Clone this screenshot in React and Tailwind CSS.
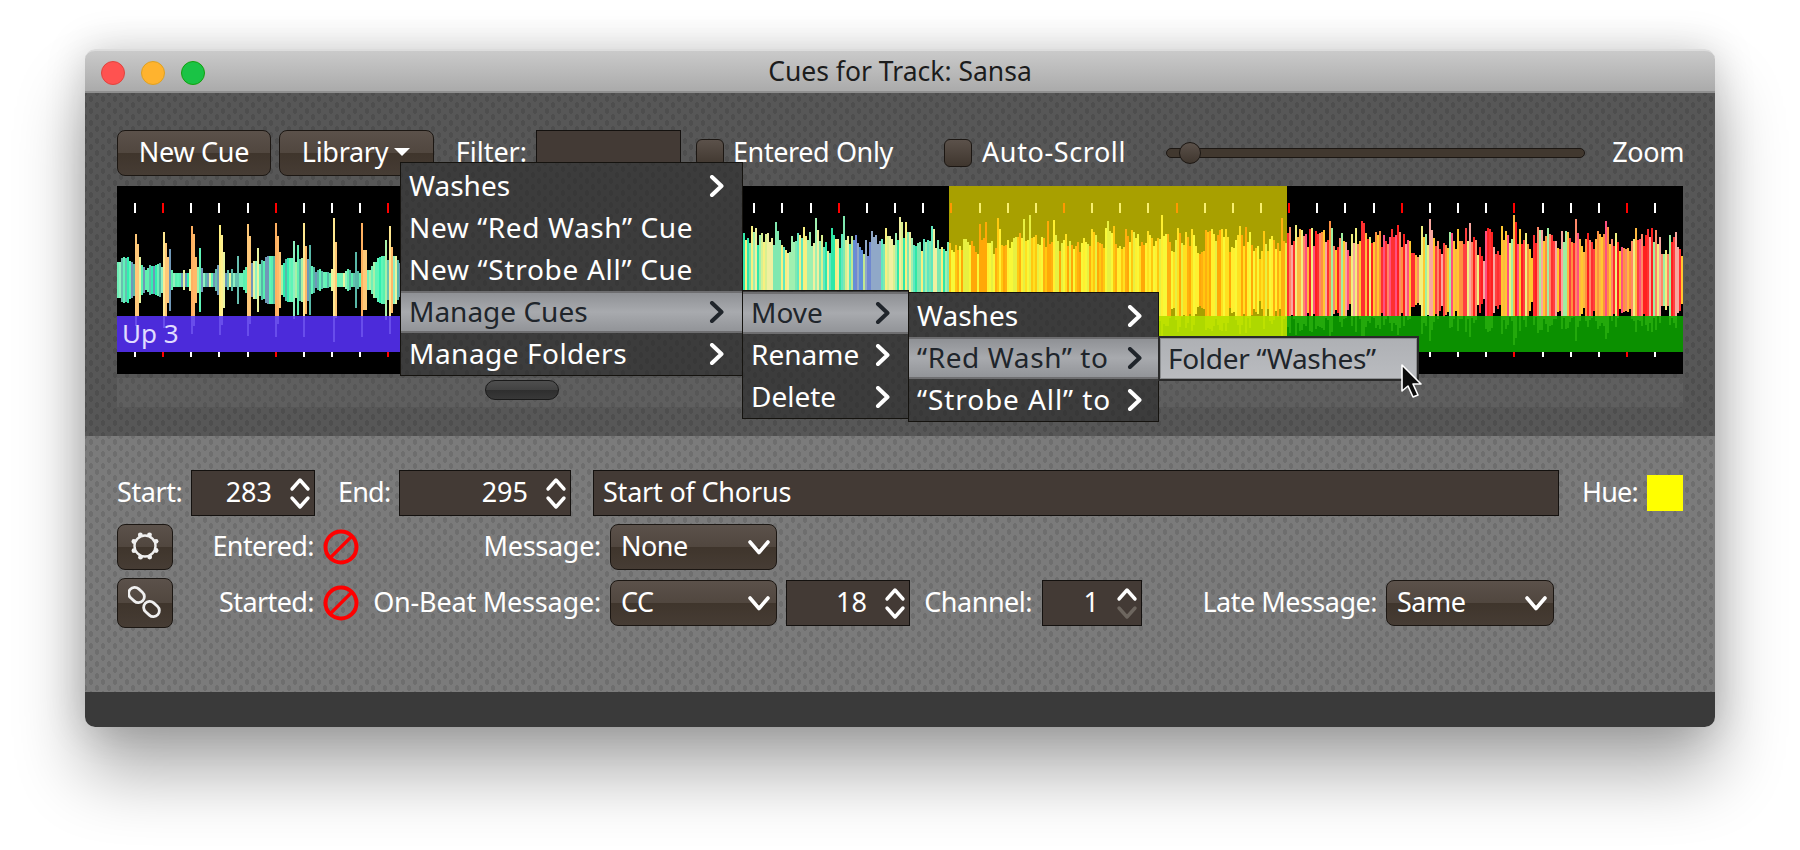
import React from "react";

const uiFont = "[font-family:'Noto_Sans',sans-serif]";
const darkTex =
  "bg-[#575757] bg-[radial-gradient(ellipse_2px_3px,#4e4e4e_90%,transparent_100%),radial-gradient(ellipse_2px_3px,#4e4e4e_90%,transparent_100%)] bg-[length:12px_12px] bg-[position:0_0,6px_6px]";
const lightTex =
  "bg-[#7b7b7b] bg-[radial-gradient(ellipse_2px_3px,#6e6e6e_90%,transparent_100%),radial-gradient(ellipse_2px_3px,#6e6e6e_90%,transparent_100%)] bg-[length:12px_12px] bg-[position:0_0,6px_6px]";
const menuTex =
  "bg-[#3c3c3c] bg-[radial-gradient(ellipse_2px_3px,#383838_90%,transparent_100%),radial-gradient(ellipse_2px_3px,#383838_90%,transparent_100%)] bg-[length:12px_12px] bg-[position:0_0,6px_6px]";
const btnBg = "bg-[linear-gradient(#5b514a,#51473f_49%,#3f352c_50%,#463c34)]";

// seeded so the waveform is the same each run
let seed = 20240611;
const rnd = () => {
  seed = (seed + 0x6d2b79f5) | 0;
  let t = Math.imul(seed ^ (seed >>> 15), 1 | seed);
  t = (t + Math.imul(t ^ (t >>> 7), 61 | t)) ^ t;
  return ((t ^ (t >>> 14)) >>> 0) / 4294967296;
};
const pick = (list) => list[Math.floor(rnd() * list.length)];

const WAVE_X = 117;
const mint = ["#70f0b8", "#58f0b0", "#5ff5b8", "#90f0c0", "#30f0b0", "#58b8a8", "#a8f0a8", "#60f0b0", "#e8f5a0", "#68c0b0", "#7098b8"];
const pale = ["#f0f0a0", "#a0f0b0", "#60e8c0", "#d8f090", "#30e8a8", "#f8f080", "#80e8b0"];
const blues = ["#6090d8", "#7088d0", "#90a8c8", "#c0e890"];
const yellows = ["#fff030", "#ffe020", "#ffc810", "#ffa808", "#e8f040", "#f8f838", "#ffb010"];
const reds = ["#ff3030", "#ff4040", "#ff9040", "#ffb840", "#ff5080", "#ffc830", "#f0f080", "#a0f0a0", "#ff2020", "#ff8868", "#f8a8a0"];

const buildBars = () => {
  const bars = [];
  let env = 0;
  let body = 14;
  let color = "#70f0b8";
  for (let ax = WAVE_X; ax < 1683; ax += 2) {
    const sinceBeat = (ax - 135 + 2816) % 28.15;
    let amp;
    if (ax < 420) {
      body = Math.max(7, Math.min(24, body + (rnd() - 0.5) * 10));
      if (sinceBeat < 2) {
        amp = 44 + rnd() * 21;
        color = pick(["#ffc878", "#ffb060", "#ffe890", "#fff080"]);
      } else if (sinceBeat < 4) {
        amp = 30 + rnd() * 16;
        color = pick(["#ffc878", "#ffb868", "#fff090"]);
      } else if (sinceBeat < 6 && rnd() < 0.6) {
        amp = 22 + rnd() * 12;
        color = pick(["#ffc878", "#ffb868", "#e8f5a0"]);
      } else {
        amp = body + (rnd() < 0.08 ? 16 : 0);
        color = pick(mint);
      }
    } else {
      if (rnd() < 0.3) env = 50 + rnd() * 18;
      else env *= 0.88;
      const floor = ax < 949 ? 24 : ax < 1287 ? 20 : 8;
      const spread = ax < 1287 ? 18 : 26;
      amp = Math.max(floor + rnd() * spread, env * (0.65 + rnd() * 0.35));
      if (ax < 949) {
        color = pick(ax > 850 && ax < 880 ? blues : pale);
      } else if (ax < 1287) {
        color = pick(yellows);
      } else {
        color = pick(reds);
      }
    }
    bars.push({ x: ax - WAVE_X, h: Math.min(amp, 65), color });
  }
  return bars;
};
const waveBars = buildBars();
const beats = Array.from({ length: 56 }, (_, i) => 135 + i * 28.15).filter((b) => b < 1683);

const Waveform = () => (
  <div className="relative h-[188px] w-[1566px] bg-black">
    <svg width="1566" height="188" viewBox="0 0 1566 188" shapeRendering="crispEdges" className="absolute inset-0">
      <rect x="832" y="0" width="338" height="130" fill="#a8a000" />
      {beats.map((b, i) => {
        const inYellow = b > 949 && b < 1287;
        const red = i % 4 === 1;
        const fill = inYellow ? (red ? "#ff9800" : "#f8f070") : red ? "#ff0000" : "#ffffff";
        return (
          <g key={b}>
            <rect x={Math.round(b) - WAVE_X - 1} y="17" width="2" height="10" fill={fill} />
            <rect x={Math.round(b) - WAVE_X - 1} y="166" width="2" height="5" fill={fill} />
          </g>
        );
      })}
      {waveBars.map((bar) => (
        <rect key={bar.x} x={bar.x} y={94 - bar.h} width="2" height={bar.h * 2} fill={bar.color} />
      ))}
      <rect x="0" y="130" width="832" height="36" fill="#4c2bda" />
      <rect x="832" y="130" width="338" height="36" fill="#aed800" />
      <rect x="1170" y="130" width="396" height="36" fill="#0b9000" />
      {/* the waveform shows faintly through the cue bars */}
      {waveBars
        .filter((bar) => bar.h > 36)
        .map((bar) => (
          <rect
            key={bar.x}
            x={bar.x}
            y="130"
            width="2"
            height={bar.h - 36}
            fill={bar.x < 832 ? "#8c78ff" : bar.x < 1170 ? "#d0ee00" : "#40c818"}
            fillOpacity="0.45"
          />
        ))}
    </svg>
    <span className="absolute left-[5px] top-[129px] text-[26px] leading-[36px] text-[#e0dcff]">Up 3</span>
  </div>
);

const ChevronRight = ({ className = "text-white" }) => (
  <svg width="16" height="22" viewBox="0 0 16 22" className={`shrink-0 ${className}`}>
    <path d="M3 2 L12.5 11 L3 20" fill="none" stroke="currentColor" strokeWidth="4" strokeLinecap="round" strokeLinejoin="round" />
  </svg>
);

const ChevronDown = () => (
  <svg width="22" height="15" viewBox="0 0 22 15" className="shrink-0 text-white">
    <path d="M2 2 L11 12.5 L20 2" fill="none" stroke="currentColor" strokeWidth="3.6" strokeLinecap="round" strokeLinejoin="round" />
  </svg>
);

const SpinArrows = ({ dimDown = false }) => (
  <svg width="22" height="33" viewBox="0 0 22 33" className="shrink-0">
    <path d="M3 12 L11 3 L19 12" fill="none" stroke="#ffffff" strokeWidth="3.4" strokeLinecap="round" strokeLinejoin="round" />
    <path d="M3 21 L11 30 L19 21" fill="none" stroke={dimDown ? "#6d665f" : "#ffffff"} strokeWidth="3.4" strokeLinecap="round" strokeLinejoin="round" />
  </svg>
);

const NoIcon = () => (
  <svg width="36" height="36" viewBox="0 0 36 36" className="shrink-0">
    <circle cx="18" cy="18" r="15.5" fill="none" stroke="#ff0000" strokeWidth="4" />
    <path d="M7.5 28.5 L28.5 7.5" stroke="#ff0000" strokeWidth="3.2" />
  </svg>
);

const GearIcon = () => (
  <svg width="34" height="34" viewBox="0 0 34 34">
    <circle cx="17" cy="17" r="10.5" fill="none" stroke="#f0f0f0" strokeWidth="2.4" />
    {[22, 67, 112, 157, 202, 247, 292, 337].map((a) => (
      <circle
        key={a}
        cx={17 + 12 * Math.cos((a * Math.PI) / 180)}
        cy={17 + 12 * Math.sin((a * Math.PI) / 180)}
        r="2.4"
        fill="#f0f0f0"
      />
    ))}
  </svg>
);

const LinkIcon = () => (
  <svg width="34" height="34" viewBox="0 0 34 34" fill="none" stroke="#f0f0f0" strokeWidth="2.8">
    <rect x="0" y="4" width="17" height="12" rx="6" transform="rotate(42 8.5 10)" />
    <rect x="15" y="18" width="17" height="12" rx="6" transform="rotate(42 23.5 24)" />
  </svg>
);

const Button = ({ className = "", children }) => (
  <div className={`flex h-[46px] shrink-0 items-center justify-center rounded-[8px] border border-[#1c1713] pb-[2px] text-[27px] text-white ${btnBg} ${className}`}>
    {children}
  </div>
);

const Select = ({ value, className = "" }) => (
  <div className={`flex h-[46px] shrink-0 items-center justify-between rounded-[8px] border border-[#1c1713] pl-[10px] pr-[6px] text-[27px] text-white ${btnBg} ${className}`}>
    <span className="pb-[2px] tracking-[-0.5px]">{value}</span>
    <ChevronDown />
  </div>
);

const Spinner = ({ value, className = "", dimDown }) => (
  <div className={`flex h-[46px] shrink-0 items-center justify-end border border-[#14110f] bg-[#433a35] pr-[3px] text-[27px] text-white ${className}`}>
    <span className="mr-[17px] pb-[2px]">{value}</span>
    <SpinArrows dimDown={dimDown} />
  </div>
);

const Label = ({ className = "", children }) => (
  <span className={`shrink-0 whitespace-nowrap pb-[2px] text-[27px] text-white ${className}`}>{children}</span>
);

const Check = ({ className = "" }) => (
  <div className={`h-[28px] w-[28px] shrink-0 rounded-[6px] border border-[#1c1713] bg-[linear-gradient(#5b514a,#3f362e)] ${className}`} />
);

const MenuItem = ({ label, sub, active, arrowGap = "pr-[15px]", track = "" }) => (
  <div
    className={`flex h-[42px] items-center justify-between whitespace-nowrap pl-[8px] text-[28px] ${arrowGap} ${
      active
        ? "border-y-2 border-[#6e6e70] bg-[linear-gradient(#8f9195,#a8aaae_50%,#929498)] text-[#20252b]"
        : "text-white"
    }`}
  >
    <span className={`pb-[2px] ${track}`}>{label}</span>
    {sub && <ChevronRight className={active ? "text-[#20252b]" : "text-white"} />}
  </div>
);

const App = () => (
  <div className={`h-[850px] w-[1800px] overflow-hidden bg-white pl-[85px] pt-[49px] ${uiFont}`}>
    <div className="relative flex h-[678px] w-[1630px] flex-col overflow-visible rounded-[10px] shadow-[0_45px_70px_rgba(0,0,0,0.33),0_0_40px_rgba(0,0,0,0.18)]">
      {/* title bar */}
      <div className="relative flex h-[44px] shrink-0 items-center justify-center rounded-t-[10px] border-t-2 border-[#dcdcdc] bg-[linear-gradient(#cacaca,#a9a9a9)] shadow-[inset_0_-2px_0_#8f8f8f]">
        <div className="absolute left-[16px] top-[10px] flex gap-[16px]">
          <div className="h-[24px] w-[24px] rounded-full border border-[#e0443e] bg-[#ff5250]" />
          <div className="h-[24px] w-[24px] rounded-full border border-[#dea123] bg-[#ffb32e]" />
          <div className="h-[24px] w-[24px] rounded-full border border-[#13a10e] bg-[#1ac345]" />
        </div>
        <span className="text-[26.5px] text-[#1c1c1c]">Cues for Track: Sansa</span>
      </div>

      {/* cue list area */}
      <div className={`h-[343px] shrink-0 pl-[32px] pt-[37px] ${darkTex}`}>
        <div className="flex h-[46px] items-center">
          <Button className="w-[154px] tracking-[-0.3px]">New Cue</Button>
          <Button className="ml-[8px] w-[155px] gap-[5px]">
            <span className="tracking-[-0.3px]">Library</span>
            <svg width="18" height="9" viewBox="0 0 18 9"><path d="M1 0 H17 L9 8 Z" fill="#ffffff" /></svg>
          </Button>
          <Label className="ml-[21px] w-[72px] text-right">Filter:</Label>
          <div className="ml-[9px] h-[46px] w-[145px] shrink-0 border border-[#14110f] bg-[#433a35]" />
          <Check className="ml-[15px]" />
          <Label className="ml-[9px] w-[161px] tracking-[-0.4px]">Entered Only</Label>
          <Check className="ml-[50px]" />
          <Label className="ml-[10px] w-[145px] tracking-[0.6px]">Auto-Scroll</Label>
          <div className="relative ml-[39px] h-[10px] w-[419px] shrink-0 rounded-full border border-[#1c1713] bg-[#41382f]">
            <div className="absolute left-[12px] top-[-7px] h-[22px] w-[22px] rounded-full border border-[#1c1713] bg-[linear-gradient(#5b514a,#3f362e)]" />
          </div>
          <Label className="ml-[27px] w-[72px] text-right tracking-[-0.4px]">Zoom</Label>
        </div>

        <div className="mt-[10px]">
          <Waveform />
        </div>

        <div className="mt-[4px] h-[29px] w-[1566px] bg-white/5 pl-[368px] pt-[2px]">
          <div className="h-[20px] w-[74px] rounded-full border border-[#1a1a1a] bg-[linear-gradient(#4e4e4e,#424242_49%,#2e2e2e_50%,#383838)]" />
        </div>
      </div>

      {/* cue detail area */}
      <div className={`h-[256px] shrink-0 pl-[32px] pt-[34px] ${lightTex}`}>
        <div className="flex h-[46px] items-center">
          <Label className="w-[65px] text-right tracking-[-0.4px]">Start:</Label>
          <Spinner value="283" className="ml-[9px] w-[124px]" />
          <Label className="ml-[23px] w-[52px] text-right tracking-[-0.8px]">End:</Label>
          <Spinner value="295" className="ml-[9px] w-[172px]" />
          <div className="ml-[22px] flex h-[46px] w-[966px] shrink-0 items-center border border-[#14110f] bg-[#433a35] pb-[2px] pl-[9px] text-[27px] tracking-[-0.2px] text-white">
            Start of Chorus
          </div>
          <Label className="ml-[23px] w-[56px] text-right tracking-[-0.8px]">Hue:</Label>
          <div className="ml-[9px] h-[36px] w-[36px] shrink-0 bg-[#ffff00]" />
        </div>

        <div className="mt-[8px] flex h-[46px] items-center">
          <Button className="w-[56px]"><GearIcon /></Button>
          <Label className="ml-[24px] w-[117px] text-right tracking-[-0.6px]">Entered:</Label>
          <div className="ml-[9px]"><NoIcon /></div>
          <Label className="ml-[106px] w-[136px] text-right tracking-[-0.3px]">Message:</Label>
          <Select value="None" className="ml-[9px] w-[167px]" />
        </div>

        <div className="mt-[10px] flex h-[46px] items-center">
          <Button className="h-[50px] w-[56px]"><LinkIcon /></Button>
          <Label className="ml-[24px] w-[117px] text-right tracking-[-0.6px]">Started:</Label>
          <div className="ml-[9px]"><NoIcon /></div>
          <Label className="ml-[14px] w-[228px] text-right tracking-[-0.2px]">On-Beat Message:</Label>
          <Select value="CC" className="ml-[9px] w-[167px]" />
          <Spinner value="18" className="ml-[9px] w-[124px]" />
          <Label className="ml-[14px] w-[108px] text-right tracking-[-0.5px]">Channel:</Label>
          <Spinner value="1" dimDown className="ml-[10px] w-[100px]" />
          <Label className="ml-[60px] w-[175px] text-right tracking-[-0.5px]">Late Message:</Label>
          <Select value="Same" className="ml-[9px] w-[168px]" />
        </div>
      </div>

      {/* footer */}
      <div className="h-[35px] shrink-0 rounded-b-[10px] bg-[#3a3a3a]" />

      {/* open popup menus */}
      <div className={`absolute left-[315px] top-[113px] h-[214px] w-[343px] border border-[#15130f] py-[2px] ${menuTex}`}>
        <MenuItem label="Washes" sub arrowGap="pr-[17px]" />
        <MenuItem label="New “Red Wash” Cue" track="tracking-[0.6px]" />
        <MenuItem label="New “Strobe All” Cue" track="tracking-[0.7px]" />
        <MenuItem label="Manage Cues" sub active arrowGap="pr-[17px]" />
        <MenuItem label="Manage Folders" sub arrowGap="pr-[17px]" track="tracking-[0.5px]" />
      </div>
      <div className={`absolute left-[657px] top-[241px] h-[129px] w-[167px] border border-[#15130f] py-[1px] ${menuTex}`}>
        <MenuItem label="Move" sub active arrowGap="pr-[17px]" />
        <MenuItem label="Rename" sub arrowGap="pr-[17px]" />
        <MenuItem label="Delete" sub arrowGap="pr-[17px]" />
      </div>
      <div className={`absolute left-[823px] top-[243px] h-[130px] w-[251px] border border-[#15130f] py-[2px] ${menuTex}`}>
        <MenuItem label="Washes" sub arrowGap="pr-[15px]" />
        <MenuItem label="“Red Wash” to" sub active arrowGap="pr-[15px]" track="tracking-[0.6px]" />
        <MenuItem label="“Strobe All” to" sub arrowGap="pr-[15px]" track="tracking-[0.9px]" />
      </div>
      <div className="absolute left-[1073px] top-[287px] flex h-[45px] w-[261px] items-center border-2 border-[#2a2a2a] bg-[linear-gradient(#aeb0b4,#babcc0)] pb-[2px] pl-[8px] text-[28px] tracking-[-0.3px] text-[#20252b] shadow-[inset_0_0_0_1px_#8b8d90]">
        Folder “Washes”
      </div>

      {/* mouse pointer */}
      <svg width="28" height="38" viewBox="0 0 28 38" className="absolute left-[1314px] top-[314px]">
        <path d="M3 2 L3 28 L9 23 L14 34 L19 32 L14 21 L22 21 Z" fill="#0c0c0c" stroke="#ffffff" strokeWidth="1.6" strokeLinejoin="round" />
      </svg>
    </div>
  </div>
);

export default App;
